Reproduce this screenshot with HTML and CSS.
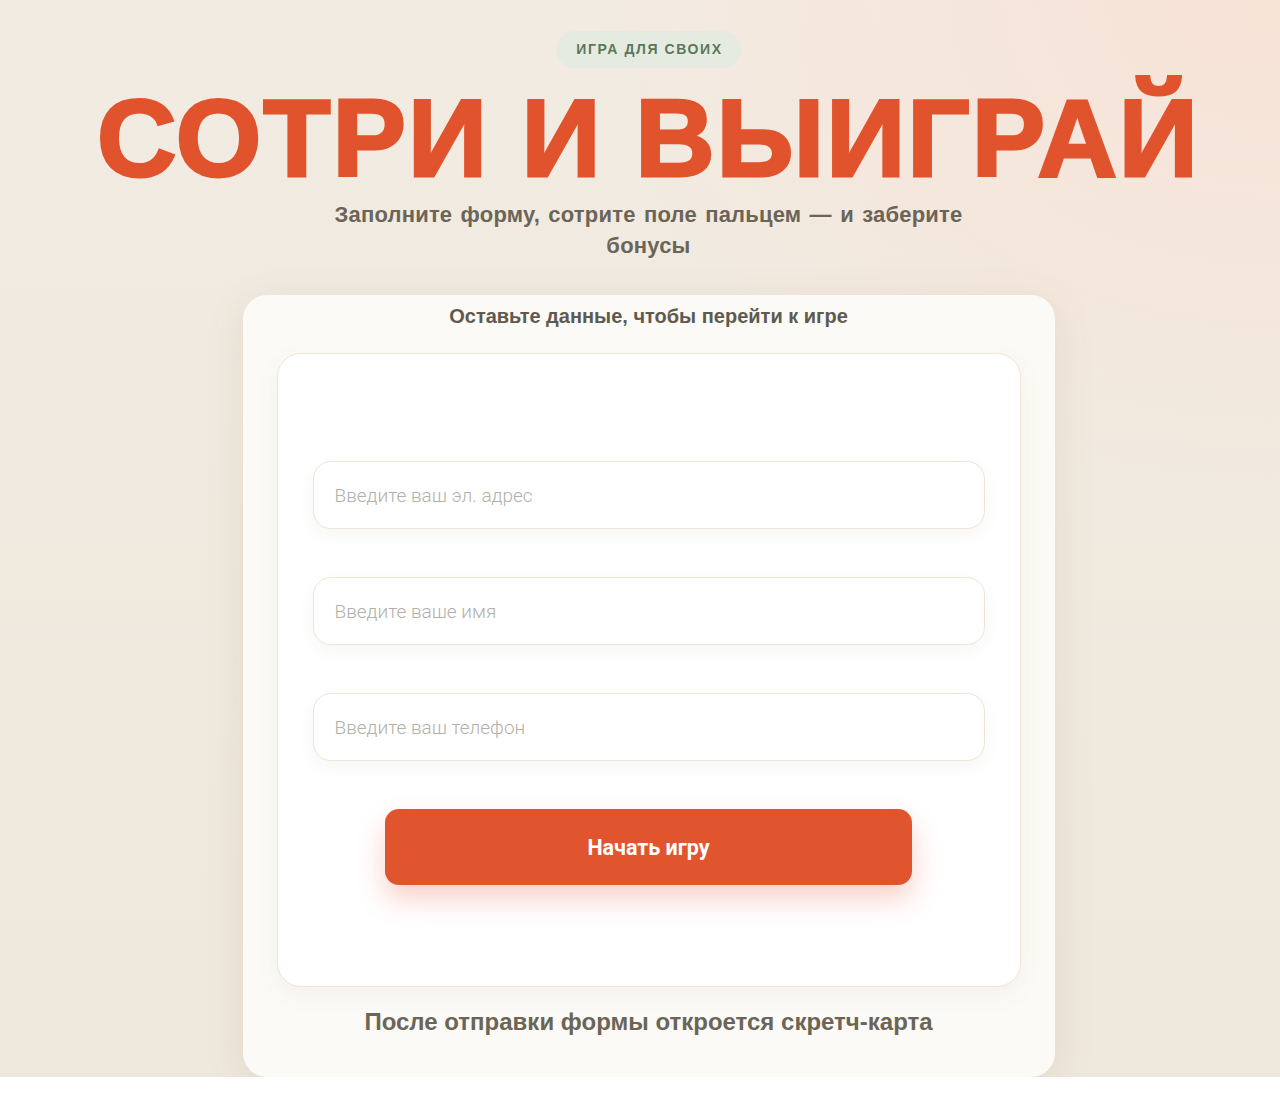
FILE: index.html
```html
<!DOCTYPE html>
<html lang="ru">
<head>
<meta charset="utf-8">
<title>Сотри и выиграй</title>
<link rel="stylesheet" href="styles.css">
</head>
<body>
<div class="page">
  <div class="hero">
    <span class="badge">Игра для своих</span>
    <h1 class="title">СОТРИ И ВЫИГРАЙ</h1>
    <p class="subtitle">Заполните форму, сотрите поле пальцем — и заберите бонусы</p>
  </div>
  <section class="card">
    <h2 class="card-heading">Оставьте данные, чтобы перейти к игре</h2>
    <form class="form-box" onsubmit="return false;">
      <input class="field" type="email" placeholder="Введите ваш эл. адрес">
      <input class="field" type="text" placeholder="Введите ваше имя">
      <input class="field" type="tel" placeholder="Введите ваш телефон">
      <button class="start-btn" type="submit">Начать игру</button>
    </form>
    <p class="card-note">После отправки формы откроется скретч-карта</p>
  </section>
</div>
</body>
</html>
```

FILE: styles.css
```css
html, body {
  margin: 0;
  padding: 0;
  background: #ffffff;
}

.page {
  height: 1077px;
  overflow: hidden;
  box-sizing: border-box;
  padding: 31px 0 0 17px;
  display: flex;
  flex-direction: column;
  align-items: center;
  background:
    radial-gradient(ellipse 700px 500px at 100% 0%, rgba(248, 226, 214, 0.95), rgba(248, 226, 214, 0) 100%),
    linear-gradient(180deg, #f2ebe2 0%, #efe8dc 100%);
  font-family: "Liberation Sans", Arial, sans-serif;
}

.hero {
  display: flex;
  flex-direction: column;
  align-items: center;
}

.badge {
  display: inline-block;
  height: 37px;
  line-height: 37px;
  padding: 0 18px 0 20px;
  border-radius: 19px;
  background: #e6ebe1;
  color: #5c785c;
  font-size: 14px;
  font-weight: 700;
  letter-spacing: 1.6px;
  text-transform: uppercase;
}

.title {
  margin: 15px 0 0;
  font-size: 110px;
  line-height: 109px;
  font-weight: 700;
  color: #e0532c;
  letter-spacing: 2px;
  -webkit-text-stroke: 3px #e0532c;
  white-space: nowrap;
}

.subtitle {
  margin: 7px 0 0;
  width: 660px;
  text-align: center;
  font-size: 22px;
  line-height: 31px;
  font-weight: 700;
  word-spacing: 2px;
  letter-spacing: 0.2px;
  color: #6b6557;
}

.card {
  margin-top: 34px;
  width: 812px;
  box-sizing: border-box;
  padding: 9px 34px 40px;
  background: #fbfaf6;
  border-radius: 24px;
  box-shadow: 0 10px 40px rgba(130, 105, 70, 0.12);
  display: flex;
  flex-direction: column;
  align-items: stretch;
}

.card-heading {
  margin: 0;
  text-align: center;
  font-size: 20px;
  line-height: 24px;
  font-weight: 700;
  color: #5f5a4f;
}

.form-box {
  margin: 25px 0 0;
  box-sizing: border-box;
  border: 1px solid #efe6d6;
  border-radius: 24px;
  background: #ffffff;
  padding: 107px 35px 101px;
  display: flex;
  flex-direction: column;
  align-items: center;
  gap: 48px;
  box-shadow: 0 8px 24px rgba(130, 105, 70, 0.06);
}

.field {
  width: 100%;
  height: 68px;
  box-sizing: border-box;
  border: 1px solid #ede5d6;
  border-radius: 18px;
  background: #ffffff;
  padding: 0 21px;
  font-family: Roboto, "Liberation Sans", sans-serif;
  font-weight: 300;
  font-size: 19px;
  color: #333;
  outline: none;
  box-shadow: 0 6px 16px rgba(120, 100, 70, 0.06);
}

.field::placeholder {
  color: #b3b0aa;
}

.start-btn {
  width: 527px;
  height: 76px;
  border: none;
  border-radius: 14px;
  background: #e0552d;
  color: #ffffff;
  font-family: Roboto, "Liberation Sans", sans-serif;
  font-weight: 700;
  font-size: 21.5px;
  cursor: pointer;
  box-shadow: 0 14px 28px rgba(230, 90, 60, 0.28);
}

.card-note {
  margin: 20px 0 0;
  text-align: center;
  font-size: 24px;
  line-height: 30px;
  font-weight: 700;
  color: #6b6557;
}
```
